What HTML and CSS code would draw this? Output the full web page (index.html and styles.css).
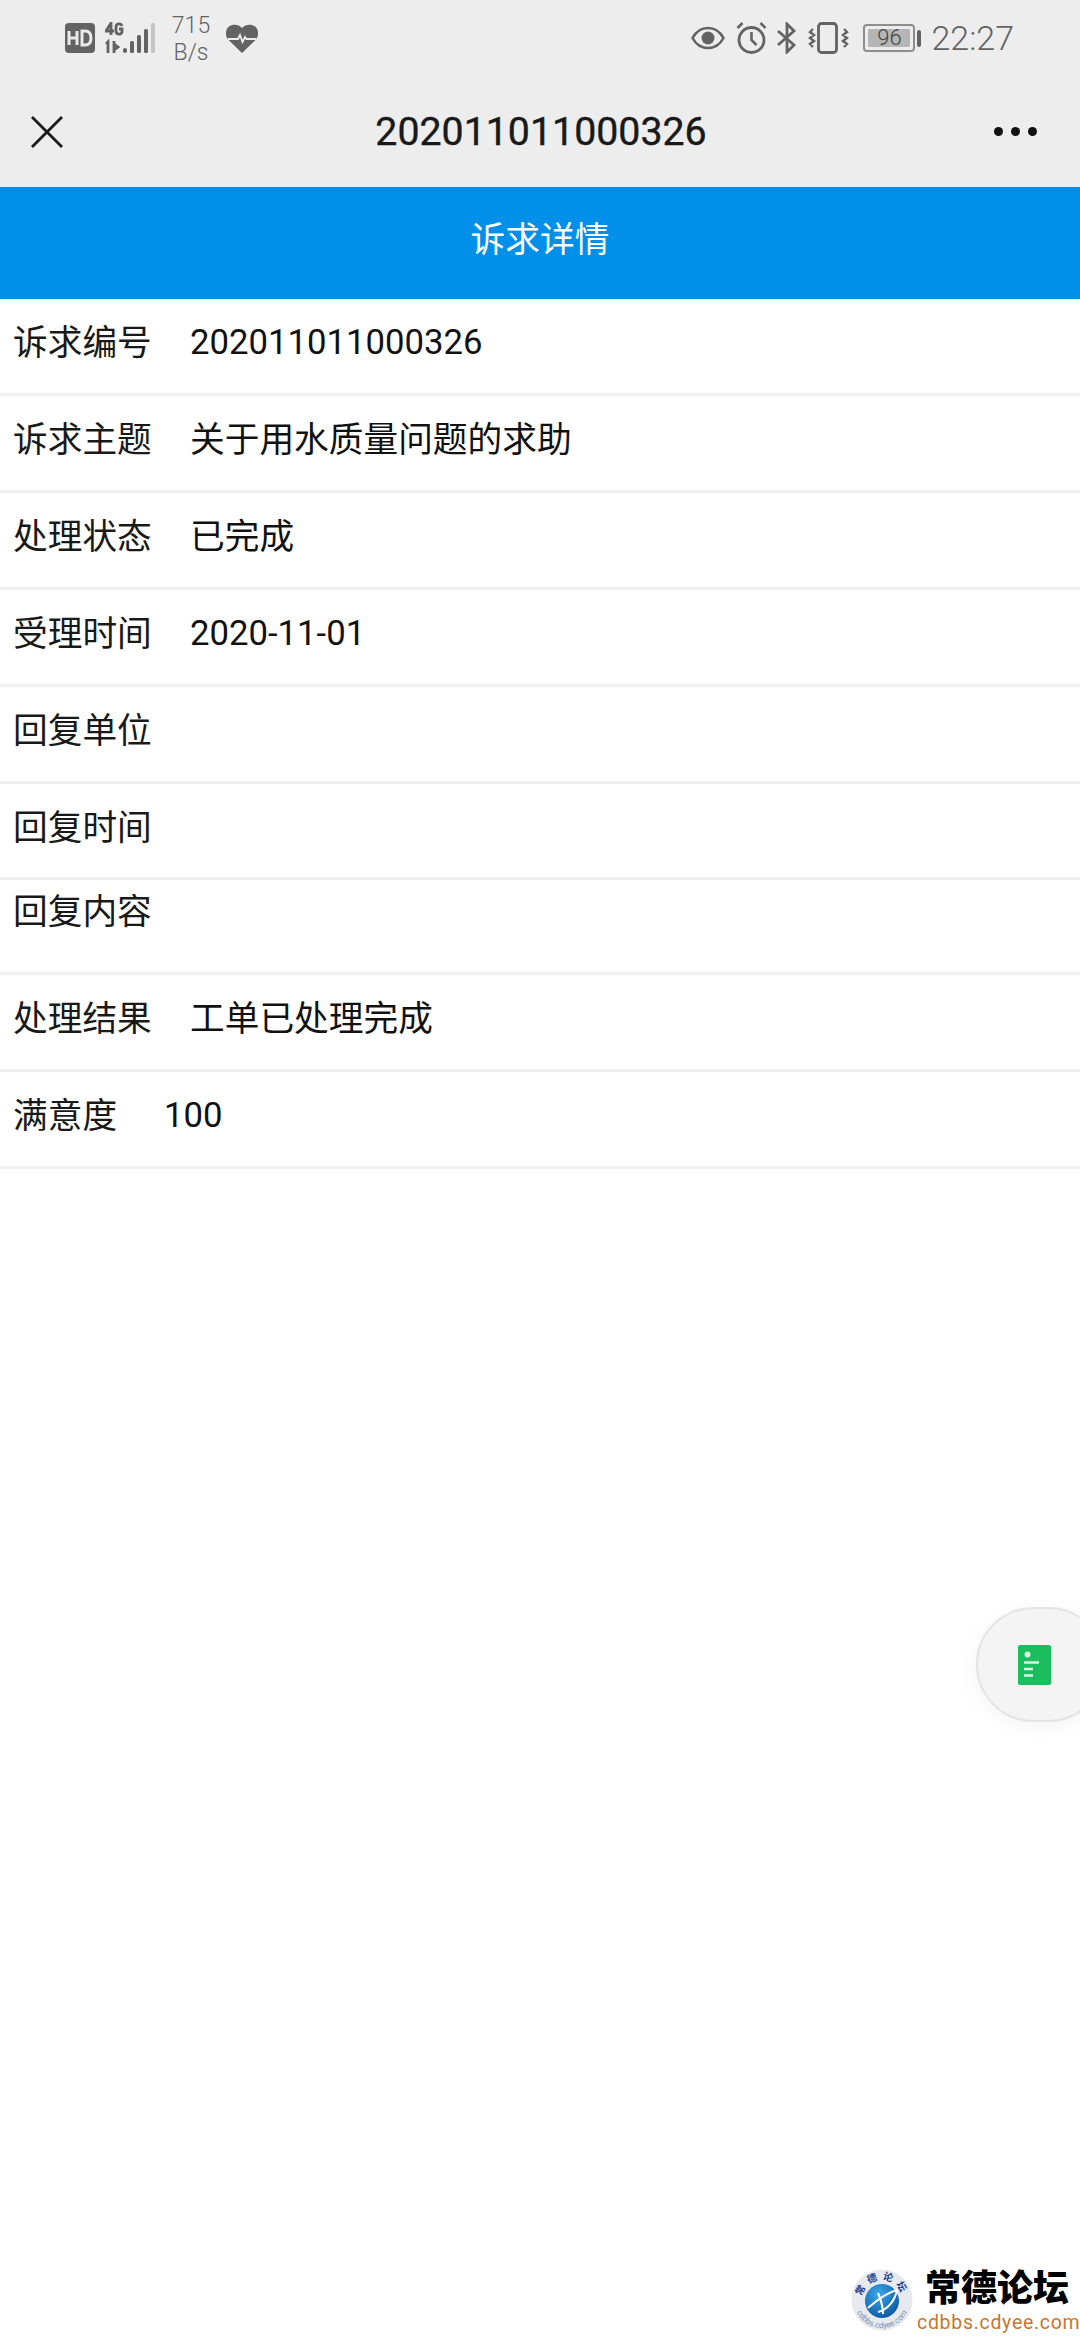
FILE: index.html
```html
<!DOCTYPE html>
<html>
	<head>
		<meta charset="utf-8">
		<title>诉求详情</title>
		<link rel="stylesheet" href="styles.css">
	</head>
	<body>
		<div class="page">
			<div class="top">
				<div class="status">
					<div class="status-left">
						<svg class="ic-hd" width="30" height="30" viewBox="0 0 30 30"><rect width="30" height="30" rx="4" fill="#636363"/><path d="M4 8v14M12 8v14M4 15h8" stroke="#eaeaea" stroke-width="3" fill="none"/><path d="M17 8v14h3c4.500 0 6-3 6-7s-1.500-7-6-7z" stroke="#eaeaea" stroke-width="3" fill="none"/></svg>
						<svg class="ic-net" width="50" height="32" viewBox="0 0 50 32"><g fill="none" stroke="#636363" stroke-width="2.800"><path d="M6 13V1L1 9h8M17 4c-1-3-6-3-6 1v4c0 4 5 4 6 1V7h-3"/><path d="M3 31V20l-2 2M9 19v12M13 25l-4-3v6z"/></g><g fill="#636363"><rect x="18" y="26" width="4" height="5" rx="2"/><rect x="25" y="19" width="4" height="12" rx="1.500"/><rect x="32" y="13" width="4" height="18" rx="1.500"/><rect x="39" y="7" width="4" height="24" rx="1.500"/><rect x="46" y="1" width="4" height="30" rx="1.500" fill="#c4c4c4"/></g></svg>
						<div class="speed">715<br>B/s</div>
						<svg class="ic-heart" width="32" height="29" viewBox="0 0 32 29"><path d="M16 29L1.500 15C-1 11-.500 5 3 2.500 7-.5 13 .5 16 4c3-3.500 9-4.500 13-1.500 3.500 2.500 4 8.500 1.500 12.500z" fill="#636363"/><path d="M2 15h10l2-4 2.500 7 2.500-5 1.500 2h10" fill="none" stroke="#ededed" stroke-width="1.800"/></svg>
					</div>
					<div class="status-right">
						<svg class="ic-eye" width="34" height="24" viewBox="0 0 34 24"><path d="M1.500 12C5 5.500 11 2 17 2s12 3.500 15.500 10C29 18.500 23 22 17 22S5 18.500 1.500 12z" fill="none" stroke="#636363" stroke-width="2.600"/><circle cx="17" cy="12" r="6.500" fill="#636363"/></svg>
						<svg class="ic-alarm" width="31" height="32" viewBox="0 0 31 32"><circle cx="15.500" cy="18" r="12.500" fill="none" stroke="#636363" stroke-width="2.800"/><path d="M15.500 10v8l5 5M1.500 6l5-5M29.500 6l-5-5" fill="none" stroke="#636363" stroke-width="2.600"/></svg>
						<svg class="ic-bt" width="20" height="32" viewBox="0 0 20 32"><path d="M1 9l16 14-7 7V2l7 7L1 23" fill="none" stroke="#636363" stroke-width="2.800"/></svg>
						<svg class="ic-vib" width="41" height="32" viewBox="0 0 41 32"><rect x="10.500" y="1.500" width="18" height="29" rx="3" fill="none" stroke="#636363" stroke-width="2.800"/><path d="M5 7L2 10l4 3-4 3 4 3-4 3 3 3M36 7l3 3-4 3 4 3-4 3 4 3-3 3" fill="none" stroke="#636363" stroke-width="2.400"/></svg>
						<div class="battery">
							<div class="battery-body"><span class="battery-level">96</span></div>
							<div class="battery-cap"></div>
						</div>
						<div class="clock">22:27</div>
					</div>
				</div>
				<div class="nav">
					<svg class="ic-close" width="32" height="32" viewBox="0 0 32 32"><path d="M1 1l30 30M31 1L1 31" stroke="#191919" stroke-width="2.800" fill="none"/></svg>
					<div class="nav-title">202011011000326</div>
					<div class="nav-more"><i></i><i></i><i></i></div>
				</div>
			</div>
			<div class="head">诉求详情</div>
			<ul class="list">
				<li><span class="label">诉求编号</span><span class="value num">202011011000326</span></li>
				<li><span class="label">诉求主题</span><span class="value">关于用水质量问题的求助</span></li>
				<li><span class="label">处理状态</span><span class="value">已完成</span></li>
				<li><span class="label">受理时间</span><span class="value num">2020-11-01</span></li>
				<li><span class="label">回复单位</span></li>
				<li class="short"><span class="label">回复时间</span></li>
				<li class="tall"><span class="label">回复内容</span></li>
				<li><span class="label">处理结果</span><span class="value">工单已处理完成</span></li>
				<li class="three"><span class="label">满意度</span><span class="value num">100</span></li>
			</ul>
			<div class="float-btn">
				<svg width="33" height="40" viewBox="0 0 33 40"><rect width="33" height="40" rx="2" fill="#1bbd5e"/><circle cx="9.500" cy="9.500" r="3" fill="#d6f5e2"/><path d="M6 17.500h15M6 24h9M6 30.500h9" stroke="#d6f5e2" stroke-width="2.600"/></svg>
			</div>
			<div class="mark">
				<svg class="mark-logo" width="62" height="62" viewBox="0 0 62 62">
					<defs>
						<radialGradient id="ball" cx="40%" cy="30%" r="80%"><stop offset="0" stop-color="#3aa7e8"/><stop offset="1" stop-color="#0a4f9e"/></radialGradient>
						<path id="arcTop" d="M11 31a20 20 0 0 1 40 0"/>
						<path id="arcBot" d="M3 31a28 28 0 0 0 56 0"/>
					</defs>
					<circle cx="31" cy="31" r="30.500" fill="#e6e9ee"/>
					<circle cx="31" cy="32" r="17" fill="url(#ball)"/>
					<path d="M17 39C24 33 34 24 46 21 44 32 36 41 27 43M27 24c3 7 5 14 5 21" fill="none" stroke="#fff" stroke-width="2"/>
					<text class="logo-cn" text-anchor="middle"><textPath href="#arcTop" startOffset="50%">常德论坛</textPath></text>
					<text class="logo-en" text-anchor="middle"><textPath href="#arcBot" startOffset="50%">cdbbs.cdyee.com</textPath></text>
				</svg>
				<div class="mark-text">
					<div class="mark-cn">常德论坛</div>
					<div class="mark-en">cdbbs.cdyee.com</div>
				</div>
			</div>
		</div>
	</body>
</html>
```

FILE: styles.css
```css
*{margin: 0;padding: 0;box-sizing: border-box;}
ul{list-style: none;}
body{background: #fff;font-family: Roboto, "Noto Sans CJK SC", sans-serif;color: #191919;}
.page{width: 1080px;height: 2340px;position: relative;overflow: hidden;background: #fff;}

.top{height: 187px;background: #ededed;}
.status{height: 76px;display: flex;justify-content: space-between;align-items: center;padding: 0 66px 0 65px;color: #636363;}
.status-left,.status-right{display: flex;align-items: center;}
.ic-net{margin-left: 10px;}
.speed{width: 72px;padding-top: 2px;font-size: 23px;line-height: 27px;text-align: center;font-weight: 300;}
.ic-heart{margin-left: -1px;}
.ic-alarm{margin-left: 11px;}
.ic-bt{margin-left: 10px;}
.ic-vib{margin-left: 11px;}
.battery{display: flex;align-items: center;margin-left: 14px;}
.battery-body{width: 52px;height: 28px;padding: 3px;border: 2px solid #8d8d8d;border-radius: 4px;}
.battery-level{display: block;height: 100%;background: #b5b5b5;border-radius: 1px;font-size: 22px;line-height: 18px;text-align: center;font-weight: 300;color: #454545;}
.battery-cap{width: 4px;height: 17px;margin-left: 2px;background: #636363;border-radius: 2px;}
.clock{margin-left: 10px;font-size: 34px;font-weight: 300;}

.nav{height: 111px;display: grid;grid-template-columns: 1fr auto 1fr;align-items: center;padding: 0 29px 0 31px;}
.nav-title{font-size: 39.300px;font-weight: 400;-webkit-text-stroke: 0.4px #191919;}
.nav-more{display: flex;justify-content: flex-end;gap: 8px;padding-right: 14px;}
.nav-more i{width: 9px;height: 9px;border-radius: 50%;background: #111;}

.head{height: 112px;background: #008fe9;color: #fff;font-size: 34.700px;line-height: 106px;text-align: center;}

.list li{height: 97px;display: flex;align-items: center;padding: 0 13px 12px;font-size: 34.700px;border-bottom: 3px solid #f0f0f0;}
.list li.short{height: 96px;}
.list li.tall{height: 95px;align-items: flex-start;padding-top: 12px;line-height: 1.200;}
.label{width: 177px;flex: none;}
.three .label{width: 151px;}
.value{color: #111;}
.num{padding-top: 3px;}

.float-btn{position: absolute;left: 976px;top: 1607px;width: 130px;height: 115px;display: flex;align-items: center;padding-left: 40px;background: #f4f4f4;border: 2px solid #e4e4e4;border-radius: 58px;box-shadow: 0 4px 22px rgba(0,0,0,0.05);}

.mark{position: absolute;left: 851px;top: 2266px;display: flex;align-items: center;}
.mark-text{margin-left: 4px;}
.mark-cn{font-size: 36px;line-height: 46px;font-weight: 900;color: #000;padding-left: 8px;white-space: nowrap;}
.mark-en{font-size: 19.500px;line-height: 22px;letter-spacing: 0.700px;color: #c9762c;white-space: nowrap;}
.logo-cn{font-size: 10px;font-weight: 700;fill: #1c3f8f;letter-spacing: 4px;}
.logo-en{font-size: 8px;fill: #7d93b4;}
```
